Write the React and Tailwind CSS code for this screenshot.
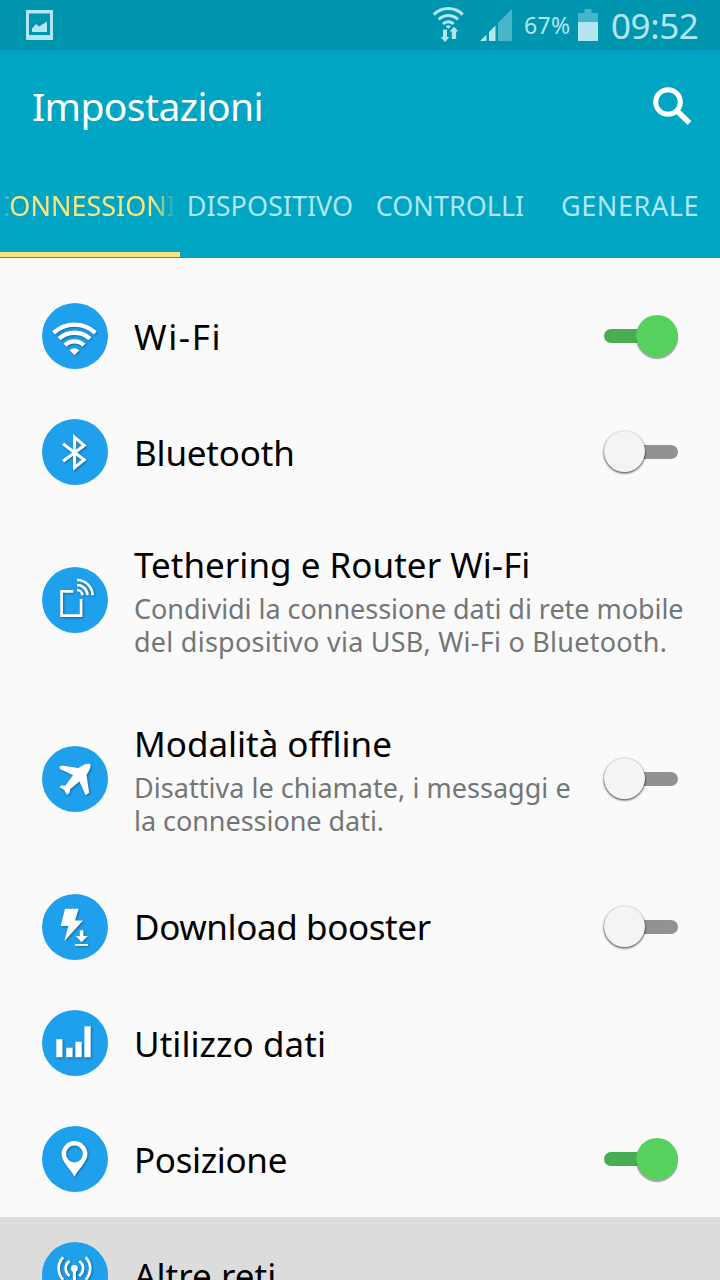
import React from "react";

function WifiGlyph() {
  return (
    <>
      <g fill="none" stroke="currentColor" strokeWidth="4.3">
        <path d="M11.6 29.9a30.6 30.6 0 0 1 41.8 0" />
        <path d="M17.1 35.8a22.6 22.6 0 0 1 30.8 0" />
        <path d="M23 42.1a14 14 0 0 1 19 0" />
      </g>
      <path d="M32.5 52.3l-4.8-5a6.9 6.9 0 0 1 9.6 0z" fill="currentColor" />
    </>
  );
}

function BluetoothGlyph() {
  return (
    <path
      d="M21 24.8L42.2 40.8L32.6 48.6V18.4L42.2 26.5L21 42.3"
      fill="none"
      stroke="currentColor"
      strokeWidth="3.1"
    />
  );
}

function TetheringGlyph() {
  return (
    <g fill="none" stroke="currentColor" strokeWidth="2.7">
      <path d="M31.4 24.3H19.6V48.7H39.1V32" />
      <path d="M35 13a15.5 15.5 0 0 1 15.6 15.2" />
      <path d="M35 18a10.4 10.4 0 0 1 10.4 10.2" />
      <path d="M35 23a5.3 5.3 0 0 1 5.3 5.2" />
    </g>
  );
}

function PlaneGlyph() {
  return (
    <path
      d="M17.5 20.5L20 19.4L36.3 21.9L41.5 19Q44.5 17.4 48.2 17.9Q49.2 20.5 47.4 24L44.5 29L47.2 46.8L43.6 49.2L37.5 35.6L28 43.2L27.7 47L24.8 48.7L22.3 43.9L17.5 41.2L19.2 39.4L23.5 39.4L31 29.2L18 23Z"
      fill="currentColor"
    />
  );
}

function BoosterGlyph() {
  return (
    <g fill="currentColor">
      <path d="M23 14.7H36.7L33 26.5H41L22.3 47.2L26.3 32H18.7Z" />
      <path d="M37.8 36.3h3.6V42h4.4l-6.2 6.2-6-6.2h4.2z" />
      <path d="M33 50h13v1.8H33z" />
    </g>
  );
}

function UsageGlyph() {
  return (
    <path
      d="M14.3 29.3h6.2v18h-6.2zM24.3 37.7h6.3v9.6h-6.3zM33.4 31.7h6.3v15.6h-6.3zM42.4 16.3h6.3v31h-6.3z"
      fill="currentColor"
    />
  );
}

function PinGlyph() {
  return (
    <path
      fillRule="evenodd"
      d="M32.5 50.7C29 43.5 19.6 36 19.6 28a12.9 12.9 0 0 1 25.8 0C45.4 36 36 43.5 32.5 50.7ZM32.5 19.6a8.4 8.4 0 1 0 0 16.8a8.4 8.4 0 1 0 0-16.8Z"
      fill="currentColor"
    />
  );
}

function AntennaGlyph() {
  return (
    <>
      <circle cx="32.4" cy="26.5" r="3.4" fill="currentColor" />
      <path d="M30.9 28h3.1v23h-3.1z" fill="currentColor" />
      <g fill="none" stroke="currentColor" strokeWidth="2.7">
        <path d="M27.6 19.2a8.8 8.8 0 0 0 0 14.6M37.2 19.2a8.8 8.8 0 0 1 0 14.6" />
        <path d="M21.2 15.3a16 16 0 0 0 0 22.4M43.6 15.3a16 16 0 0 1 0 22.4" />
      </g>
    </>
  );
}

const tabs = [
  { label: "DISPOSITIVO", className: "tracking-normal" },
  { label: "CONTROLLI", className: "tracking-normal" },
  { label: "GENERALE", className: "tracking-[0.6px]" },
];

const settings = [
  { title: "Wi-Fi", icon: WifiGlyph, on: true, tracking: "tracking-[1.6px]" },
  { title: "Bluetooth", icon: BluetoothGlyph, on: false, tracking: "tracking-[-0.2px]" },
  {
    title: "Tethering e Router Wi-Fi",
    icon: TetheringGlyph,
    tracking: "tracking-[0.02px]",
    height: "h-[180px]",
    lines: [
      { text: "Condividi la connessione dati di rete mobile", tracking: "tracking-[-0.04px]" },
      { text: "del dispositivo via USB, Wi-Fi o Bluetooth.", tracking: "tracking-[0.25px]" },
    ],
  },
  {
    title: "Modalità offline",
    icon: PlaneGlyph,
    on: false,
    tracking: "tracking-[-0.02px]",
    height: "h-[178px]",
    lines: [
      { text: "Disattiva le chiamate, i messaggi e", tracking: "tracking-[0.03px]" },
      { text: "la connessione dati.", tracking: "tracking-[-0.04px]" },
    ],
  },
  {
    title: "Download booster",
    icon: BoosterGlyph,
    on: false,
    tracking: "tracking-[-0.4px]",
    height: "h-[117px]",
  },
  { title: "Utilizzo dati", icon: UsageGlyph, tracking: "tracking-[0.05px]" },
  { title: "Posizione", icon: PinGlyph, on: true, tracking: "tracking-[-0.35px]" },
  { title: "Altre reti", icon: AntennaGlyph, tracking: "tracking-[0.05px]", pressed: true },
];

function StatusBar() {
  return (
    <div className="flex h-[50px] shrink-0 items-center bg-[#0095af] pl-[26px] text-[#b3e6f1]">
      <svg className="h-[30px] w-[27px]" viewBox="0 0 27 30" fill="currentColor">
        <path fillRule="evenodd" d="M0 0h27v30H0zM3 3.5v21.5h21V3.5z" />
        <path d="M6 22v-3.5l4-4.5 3 2.5 8-5V22z" />
      </svg>
      <svg className="ml-auto h-9 w-[34px]" viewBox="0 0 34 36">
        <g fill="none" stroke="currentColor" strokeWidth="3">
          <path d="M1.8 7.6a20.4 20.4 0 0 1 29 0" />
          <path d="M6.6 12.5a13.6 13.6 0 0 1 19.4 0" />
          <path d="M11 17a7.4 7.4 0 0 1 10.600 0" />
        </g>
        <path d="M13.700 19.400q2.600-2.200 5.200 0l-2.600 2.400z" fill="currentColor" />
        <path
          d="M11 22.500h4V30h2.300L13 35l-4.300-5H11zM19.800 32v-7.500h-2.200L22 19.700l4.400 4.800h-2.300V32z"
          fill="currentColor"
        />
      </svg>
      <svg className="ml-[14px] h-8 w-8" viewBox="0 0 32 32" fill="currentColor">
        <path d="M18 14L32 0v32H18z" opacity=".4" />
        <path d="M0 32l6.500-6.500V32zM9 23l6.500-6.500V32H9z" />
      </svg>
      <span className="ml-[12px] w-[54px] text-[23px] leading-[50px] whitespace-nowrap tracking-[0.3px]">67%</span>
      <svg className="h-8 w-5" viewBox="0 0 20 32" fill="currentColor">
        <path d="M6.500 0h7v4H20v9H0V4h6.500z" opacity=".4" />
        <path d="M0 13h20v19H0z" />
      </svg>
      <span className="mt-[2px] ml-[13px] w-[109px] text-[35px] leading-[48px] whitespace-nowrap tracking-[-0.4px]">
        09:52
      </span>
    </div>
  );
}

function Toggle({ on }) {
  return (
    <div
      className={
        on
          ? "flex h-[14px] w-[74px] shrink-0 items-center justify-end rounded-full bg-[#47ad50]"
          : "flex h-[14px] w-[74px] shrink-0 items-center rounded-full bg-[#929292]"
      }
    >
      <div
        className={
          on
            ? "mb-px size-[42px] shrink-0 rounded-full bg-[#57d15e] shadow-[0_2px_1px_rgba(0,0,0,0.35)]"
            : "mb-px size-[41px] shrink-0 rounded-full bg-[#f4f4f4] shadow-[0_1px_2px_0.5px_rgba(0,0,0,0.6)]"
        }
      />
    </div>
  );
}

function SettingRow({ item }) {
  const Icon = item.icon;

  return (
    <li
      className={`flex shrink-0 items-center pr-[42px] pl-[42px] ${item.height || "h-[116px]"} ${
        item.pressed ? "bg-[#dcdcdc]" : ""
      }`}
    >
      <div className="size-[66px] shrink-0 rounded-full bg-[#1fa0ec] text-white">
        <svg className="size-full drop-shadow-[1px_1px_1px_rgba(0,0,0,0.35)]" viewBox="0 0 66 66">
          <Icon />
        </svg>
      </div>
      <div className="ml-[26px] min-w-0 flex-1 whitespace-nowrap">
        <h2 className={`text-[35px] leading-[43px] text-black ${item.tracking}`}>{item.title}</h2>
        {item.lines && (
          <div className="mt-[6px] text-[27px] leading-[33px] text-[#737677]">
            {item.lines.map((line) => (
              <p key={line.text} className={line.tracking}>
                {line.text}
              </p>
            ))}
          </div>
        )}
      </div>
      {item.on !== undefined && <Toggle on={item.on} />}
    </li>
  );
}

export default function App() {
  return (
    <div className="flex h-[1280px] w-[720px] flex-col overflow-hidden bg-[#fafafa] font-['Noto_Sans',sans-serif]">
      <StatusBar />
      <header className="h-[208px] shrink-0 bg-[#00a5c3]">
        <div className="flex h-[112px] items-center justify-between pr-7 pl-[32px]">
          <h1 className="text-[39px] leading-[112px] tracking-[-0.6px] text-white">Impostazioni</h1>
          <svg className="size-10" viewBox="0 0 40 40" fill="none" stroke="white">
            <circle cx="16" cy="16" r="12.3" strokeWidth="5" />
            <path d="M24.5 24.5L37.5 37" strokeWidth="5.5" />
          </svg>
        </div>
        <nav className="grid h-24 grid-cols-4 text-[27px] leading-[88px] whitespace-nowrap text-[#aee7f5]">
          <div className="h-[95px] border-b-[5px] border-[#fae57f] text-[#fae57f]">
            <div className="mx-[4px] flex justify-end overflow-hidden mask-[linear-gradient(to_right,transparent,black_8px,black_148px,transparent)]">
              <span className="tracking-normal">CONNESSIONI</span>
            </div>
          </div>
          {tabs.map((tab) => (
            <div key={tab.label} className={`text-center ${tab.className}`}>
              {tab.label}
            </div>
          ))}
        </nav>
      </header>
      <ul className="flex flex-col pt-5">
        {settings.map((item) => (
          <SettingRow key={item.title} item={item} />
        ))}
      </ul>
    </div>
  );
}
